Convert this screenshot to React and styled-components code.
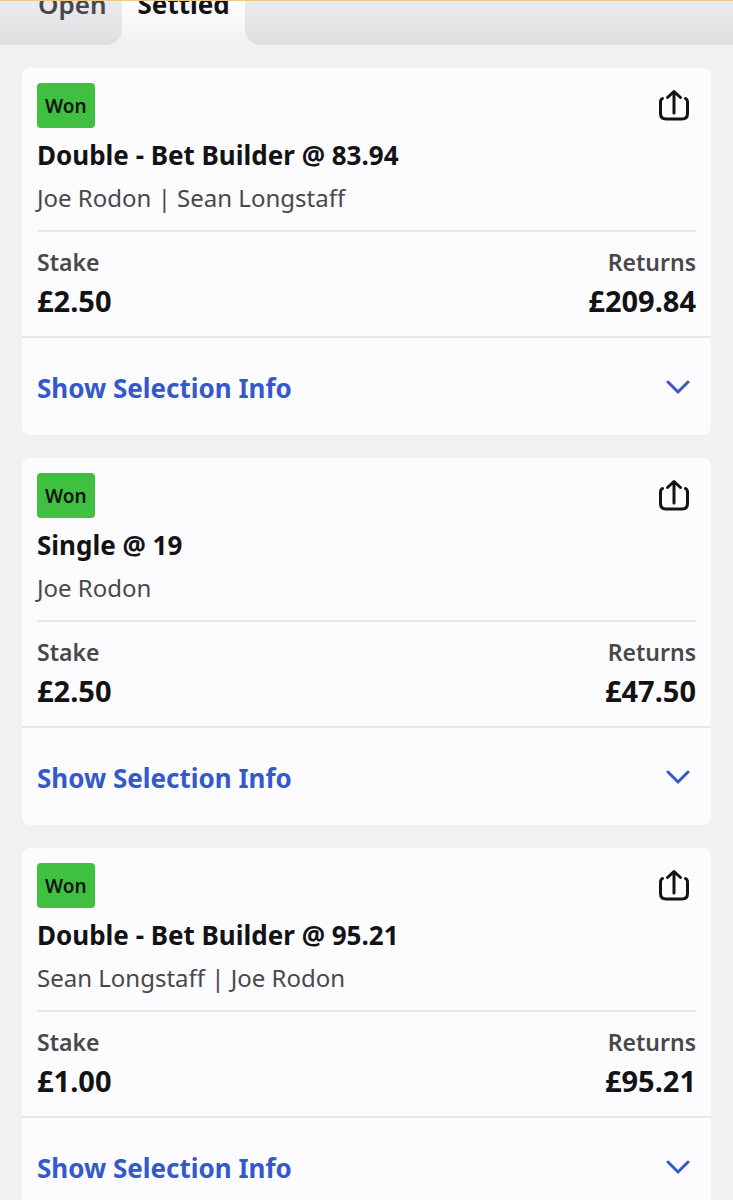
import React from "react";
import styled, { createGlobalStyle } from "styled-components";

const GlobalStyle = createGlobalStyle`
  *, *::before, *::after { box-sizing: border-box; }
  html, body, #root { height: 100%; }
  body {
    margin: 0;
    background: #f1f1f3;
    color: #131316;
    font-family: "Noto Sans", sans-serif;
  }
  h2, p, dl, dd { margin: 0; }
  button { font: inherit; border: 0; padding: 0; background: none; cursor: pointer; }
`;

const Page = styled.main`
  height: 100%;
  overflow-y: auto;
  scrollbar-width: none;
`;

const TabBar = styled.nav`
  display: flex;
  align-items: flex-end;
  height: 45px;
  overflow: hidden;
  border-top: 1px solid #ecc888;
`;

const Tab = styled.button`
  flex: none;
  height: 82px;
  padding: 0 15px 0 ${(p) => (p.$first ? 38 : 16)}px;
  border-radius: ${(p) => (p.$active ? "0" : "0 0 16px 0")};
  background: ${(p) =>
    p.$active
      ? "linear-gradient(#ffffff 40%, #f1f1f3)"
      : "linear-gradient(#f2f2f4 20%, #dfdfe1)"};
  color: ${(p) => (p.$active ? "#131316" : "#48484b")};
  && { font-size: 26px; font-weight: ${(p) => (p.$active ? 700 : 600)}; line-height: 36px; }
`;

const TabRest = styled.div`
  flex: 1;
  height: 82px;
  border-radius: 0 0 0 16px;
  background: linear-gradient(#f2f2f4 20%, #dfdfe1);
`;

const BetList = styled.div`
  display: flex;
  flex-direction: column;
  gap: 23px;
  padding: 23px 22px;
`;

const Card = styled.article`
  border-radius: 8px;
  background: #fcfcfe;
`;

const Summary = styled.div`
  padding: 15px 15px 0;
`;

const TopRow = styled.div`
  display: flex;
  align-items: flex-start;
  justify-content: space-between;
`;

const Badge = styled.span`
  height: 45px;
  padding: 0 8px;
  border-radius: 4px;
  background: #40c041;
  font-size: 19px;
  font-weight: 600;
  line-height: 46px;
`;

const ShareButton = styled.button`
  margin: 5px 6px 0 0;
  height: 34px;
  color: #131316;
  svg { display: block; }
`;

const BetTitle = styled.h2`
  margin-top: 8px;
  font-size: 26px;
  font-weight: 700;
  line-height: 38px;
`;

const Players = styled.p`
  padding: 6px 0 14px;
  border-bottom: 2px solid #e8e8eb;
  color: #48484b;
  font-size: 24px;
  line-height: 36px;
`;

const Amounts = styled.dl`
  display: flex;
  justify-content: space-between;
  padding: 13px 0 14px;
`;

const Amount = styled.div`
  text-align: ${(p) => p.$align};
  dt {
    color: #48484b;
    font-size: 23px;
    font-weight: 600;
    line-height: 34px;
  }
  dd {
    font-size: 29px;
    font-weight: 700;
    line-height: 43px;
  }
`;

const ToggleButton = styled.button`
  display: flex;
  align-items: center;
  justify-content: space-between;
  width: 100%;
  height: 99px;
  && { padding: 2px 21px 0 15px; border-top: 2px solid #e8e8eb; }
  color: #3558cb;
  && { font-size: 26px; font-weight: 700; line-height: 38px; }
`;

function ShareIcon() {
  return (
    <svg width="32" height="34" viewBox="0 0 32 34" fill="none" stroke="currentColor" strokeWidth="3" strokeLinecap="round" strokeLinejoin="round" aria-hidden="true">
      <path d="M4.5 10.5Q2.5 11.5 2.5 14V25.5Q2.5 31 8 31H24Q29.5 31 29.5 25.5V14Q29.5 11.5 27.5 10.5" />
      <path d="M16 25V3.5M9.5 9.5L16 3.5L22.5 9.5" />
    </svg>
  );
}

function ChevronIcon() {
  return (
    <svg width="24" height="18" viewBox="0 0 24 18" fill="none" stroke="currentColor" strokeWidth="3" strokeLinecap="round" strokeLinejoin="miter" aria-hidden="true">
      <path d="M2 3L12 13L22 3" />
    </svg>
  );
}

const bets = [
  { title: "Double - Bet Builder @ 83.94", players: "Joe Rodon | Sean Longstaff", stake: "£2.50", returns: "£209.84" },
  { title: "Single @ 19", players: "Joe Rodon", stake: "£2.50", returns: "£47.50" },
  { title: "Double - Bet Builder @ 95.21", players: "Sean Longstaff | Joe Rodon", stake: "£1.00", returns: "£95.21" },
];

function BetCard({ bet }) {
  return (
    <Card>
      <Summary>
        <TopRow>
          <Badge>Won</Badge>
          <ShareButton type="button" aria-label="Share bet"><ShareIcon /></ShareButton>
        </TopRow>
        <BetTitle>{bet.title}</BetTitle>
        <Players>{bet.players}</Players>
        <Amounts>
          <Amount $align="left"><dt>Stake</dt><dd>{bet.stake}</dd></Amount>
          <Amount $align="right"><dt>Returns</dt><dd>{bet.returns}</dd></Amount>
        </Amounts>
      </Summary>
      <ToggleButton type="button" aria-expanded="false">
        Show Selection Info
        <ChevronIcon />
      </ToggleButton>
    </Card>
  );
}

export default function App() {
  return (
    <>
      <GlobalStyle />
      <Page>
        <TabBar aria-label="Bet status">
          <Tab type="button" $first>Open</Tab>
          <Tab type="button" $active aria-current="page">Settled</Tab>
          <TabRest />
        </TabBar>
        <BetList>
          {bets.map((bet) => <BetCard key={bet.title} bet={bet} />)}
        </BetList>
      </Page>
    </>
  );
}
